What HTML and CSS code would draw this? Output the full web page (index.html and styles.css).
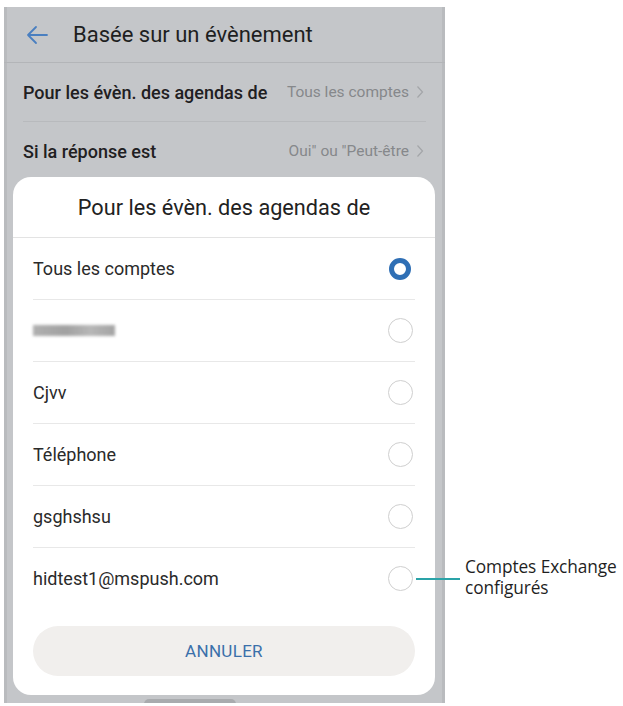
FILE: index.html
```html
<!DOCTYPE html>
<html lang="fr">
<head>
<meta charset="utf-8">
<title>Basée sur un évènement</title>
<link rel="stylesheet" href="styles.css">
</head>
<body>
<div class="canvas">
  <div class="phone">
    <header class="appbar">
      <svg class="back" width="24" height="20" viewBox="0 0 24 20" aria-hidden="true">
        <path d="M22 10H3M11 2L3 10l8 8" fill="none" stroke="#4a7fc0" stroke-width="1.8" stroke-linecap="round" stroke-linejoin="round"/>
      </svg>
      <h1 class="appbar-title">Basée sur un évènement</h1>
    </header>
    <div class="settings">
      <div class="setting">
        <span class="setting-label">Pour les évèn. des agendas de</span>
        <span class="setting-value">Tous les comptes
          <svg class="chev" width="8" height="14" viewBox="0 0 8 14" aria-hidden="true"><path d="M1.5 1.5L6.5 7l-5 5.5" fill="none" stroke="#a3a5a8" stroke-width="1.2"/></svg>
        </span>
      </div>
      <div class="setting">
        <span class="setting-label">Si la réponse est</span>
        <span class="setting-value">Oui" ou "Peut-être
          <svg class="chev" width="8" height="14" viewBox="0 0 8 14" aria-hidden="true"><path d="M1.5 1.5L6.5 7l-5 5.5" fill="none" stroke="#a3a5a8" stroke-width="1.2"/></svg>
        </span>
      </div>
    </div>
    <div class="navpill"></div>

    <div class="dialog">
      <div class="dialog-title">Pour les évèn. des agendas de</div>
      <ul class="options">
        <li class="option"><span>Tous les comptes</span><span class="radio checked"></span></li>
        <li class="option"><span class="blurred"></span><span class="radio"></span></li>
        <li class="option"><span>Cjvv</span><span class="radio"></span></li>
        <li class="option"><span>Téléphone</span><span class="radio"></span></li>
        <li class="option"><span>gsghshsu</span><span class="radio"></span></li>
        <li class="option"><span>hidtest1@mspush.com</span><span class="radio"></span></li>
      </ul>
      <div class="cancel">ANNULER</div>
    </div>
  </div>

  <div class="callout">
    <span class="callout-line"></span>
    <span class="callout-text">Comptes Exchange<br>configurés</span>
  </div>
</div>
</body>
</html>
```

FILE: styles.css
```css
html, body {
  margin: 0;
  padding: 0;
  background: #ffffff;
}

body {
  font-family: Roboto, "Noto Sans", "Liberation Sans", sans-serif;
  color: #222;
}

.canvas {
  position: relative;
  width: 623px;
  height: 706px;
  overflow: hidden;
}

.phone {
  position: relative;
  margin: 7px 0 0 4px;
  width: 441px;
  height: 696px;
  background: #c4c6c9;
  box-shadow: inset 3px 0 0 #b9bbbe, inset -3px 0 0 #b9bbbe;
  overflow: hidden;
}

.appbar {
  display: flex;
  align-items: center;
  height: 55px;
  padding-left: 21px;
  border-bottom: 1px solid #b3b5b8;
}

.back {
  display: block;
  margin-right: 24px;
}

.appbar-title {
  margin: 0;
  font-size: 22px;
  font-weight: 400;
  color: #1e1f21;
}

.settings {
  padding: 0 19px;
}

.setting {
  display: flex;
  align-items: center;
  justify-content: space-between;
  height: 58px;
  border-bottom: 1px solid #b8babd;
}

.setting:last-child {
  border-bottom: none;
}

.setting-label {
  font-size: 18px;
  font-weight: 500;
  color: #1f2022;
}

.setting-value {
  display: flex;
  align-items: center;
  gap: 7px;
  font-size: 15.5px;
  color: #86888b;
}

.chev {
  display: block;
  margin-right: 2px;
}

.navpill {
  position: absolute;
  left: 140px;
  bottom: -6px;
  width: 92px;
  height: 10px;
  border-radius: 5px;
  background: #a9abae;
}

.dialog {
  position: absolute;
  left: 9px;
  top: 170px;
  width: 422px;
  height: 518px;
  background: #ffffff;
  border-radius: 18px;
  display: flex;
  flex-direction: column;
}

.dialog-title {
  height: 60px;
  display: flex;
  align-items: center;
  justify-content: center;
  font-size: 21.7px;
  color: #222;
  border-bottom: 1px solid #e3e3e3;
}

.options {
  list-style: none;
  margin: 0;
  padding: 0 20px;
}

.option {
  display: flex;
  align-items: center;
  justify-content: space-between;
  height: 61px;
  border-bottom: 1px solid #e8e8e8;
  font-size: 18px;
  color: #2a2a2a;
}

.option:last-child {
  border-bottom: none;
}

.blurred {
  display: block;
  width: 82px;
  height: 11px;
  background: linear-gradient(90deg, #9d9d9d 0%, #8a8a8a 40%, #a5a5a5 70%, #8d8d8d 100%);
  filter: blur(1.5px);
  opacity: 0.8;
}

.radio {
  box-sizing: border-box;
  width: 25px;
  height: 25px;
  margin-right: 2px;
  border-radius: 50%;
  border: 1.2px solid #cfcfcf;
}

.radio.checked {
  width: 22px;
  height: 22px;
  margin-right: 4px;
  border: 5.5px solid #2f6fb5;
}

.cancel {
  margin: 17px 20px 0;
  height: 50px;
  border-radius: 25px;
  background: #f1efed;
  display: flex;
  align-items: center;
  justify-content: center;
  font-size: 17px;
  color: #3b70aa;
  letter-spacing: 0.3px;
}

.callout {
  position: absolute;
  left: 416px;
  top: 556px;
  display: flex;
  align-items: flex-start;
}

.callout-line {
  display: block;
  width: 44px;
  height: 2px;
  margin-top: 22px;
  background: #2aa3a8;
}

.callout-text {
  margin-left: 5px;
  font-family: "Open Sans", "Noto Sans", sans-serif;
  font-size: 17.3px;
  line-height: 21px;
  color: #1f1f1f;
  letter-spacing: -0.1px;
}
```
